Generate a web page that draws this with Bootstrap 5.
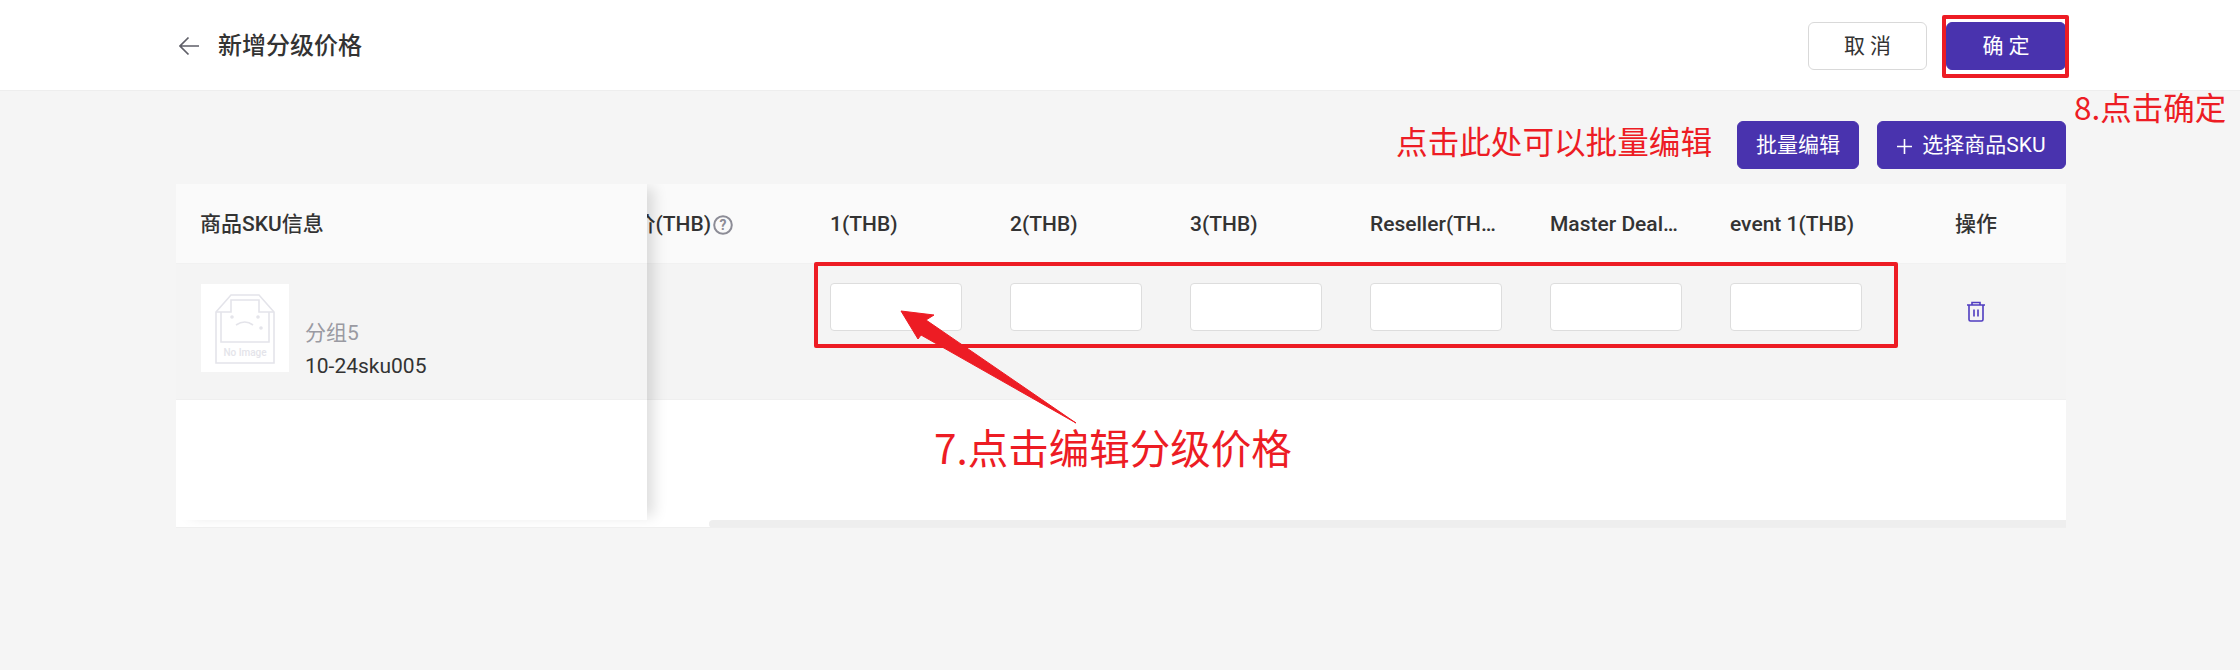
<!DOCTYPE html>
<html lang="zh-CN">
<head>
  <meta charset="UTF-8" />
  <title>新增分级价格</title>
  <link href="https://cdn.jsdelivr.net/npm/bootstrap@5.3.0/dist/css/bootstrap.min.css" rel="stylesheet" />
  <style>
    body {
      background: #f5f5f5;
      color: #333;
      font-family: Roboto, "Noto Sans CJK SC", sans-serif;
      font-size: 21px;
      height: 670px;
      overflow: hidden;
      position: relative;
    }

    /* top bar */
    .top-bar {
      height: 91px;
      background: #fff;
      border-bottom: 1px solid #eee;
      padding: 22px 174px 0 179px;
    }
    .page-title { font-size: 24px; font-weight: 500; line-height: 48px; margin-left: 19px; }
    .back-arrow { width: 20px; height: 48px; }

    .btn-plain, .btn-violet {
      height: 48px;
      font-size: 21px;
      line-height: 1;
      border-radius: 6px;
      padding: 0;
    }
    .btn-plain { width: 119px; margin-right: 19px; background: #fff; border: 1px solid #d9d9d9; color: #333; letter-spacing: 5px; padding-left: 5px; }
    .btn-violet { background: #4933ae; border: 1px solid #4933ae; color: #fff; }
    .btn-violet:hover { background: #4933ae; border-color: #4933ae; color: #fff; }
    .btn-ok { width: 120px; letter-spacing: 5px; padding-left: 5px; }
    .btn-batch { width: 122px; margin-right: 18px; }
    .btn-sku { width: 189px; }
    .btn-sku svg { margin-right: 10px; vertical-align: -2px; }

    /* toolbar */
    .tool-row { height: 93px; padding: 30px 174px 0 0; }
    .mark-text { color: #ed1c24; font-family: "Noto Sans CJK SC", sans-serif; line-height: 1; white-space: nowrap; }
    .mark-batch { font-size: 31.6px; margin-right: 25px; }

    /* table panel */
    .price-panel {
      margin-left: 176px;
      width: 1890px;
      height: 344px;
      background: #fff;
      overflow: hidden;
      border-bottom: 1px solid #efefef;
    }
    .fixed-col {
      width: 471px;
      height: 336px;
      background: #fff;
      flex: none;
      position: relative;
      z-index: 1;
      box-shadow: 11px 0 13px -4px rgba(0, 0, 0, .13);
    }
    .scroll-col { width: 1419px; height: 344px; }
    .head-row {
      height: 80px;
      padding-top: 2px;
      background: #fafafa;
      font-weight: 500;
      border-bottom: 1px solid #f1f1f1;
    }
    .data-row { height: 136px; background: #f4f4f4; border-bottom: 1px solid #efefef; }
    .fixed-col .head-row { padding-left: 24px; }
    .fixed-col .data-row { padding: 20px 0 0 25px; }
    .thumb-box { width: 88px; height: 88px; background: #fff; margin-right: 16px; flex: none; }
    .sku-text { padding-top: 33px; line-height: 33px; }
    .sku-group { color: #9a9aa2; }

    .price-cell { width: 180px; flex: none; padding-left: 24px; padding-right: 24px; }
    .head-row .price-cell { padding-right: 27px; }
    .clip-cell { width: 159px; flex: none; overflow: hidden; padding-right: 73px; white-space: nowrap; }
    .help-icon { margin-left: 2px; flex: none; }
    .data-row .price-cell { padding-top: 19px; }
    .price-input {
      height: 48px;
      border: 1px solid #ddd;
      border-radius: 4px;
      background: #fff;
      padding: 0 10px;
    }
    .head-action { width: 180px; flex: none; }
    .action-cell { width: 180px; flex: none; padding-top: 37px; }
    .fake-scroll { height: 8px; margin: auto 0 0 62px; background: #eee; border-radius: 4px 0 0 4px; }

    /* red annotations laid over the page */
    .mark-box { position: absolute; border: 4px solid #ed1c24; border-radius: 2px; }
    .mark-ok { left: 1942px; top: 15px; width: 127px; height: 63px; }
    .mark-inputs { left: 814px; top: 262px; width: 1084px; height: 86px; }
    .mark-float { position: absolute; }
    .mark-confirm { left: 2074px; top: 91px; font-size: 31.5px; }
    .mark-edit { left: 934px; top: 427px; font-size: 40.5px; }
    .mark-arrow { position: absolute; left: 890px; top: 300px; }
  </style>
</head>
<body>
  <div class="top-bar d-flex align-items-start">
    <svg class="back-arrow" viewBox="0 0 20 48" fill="none" stroke="#5f5f68" stroke-width="1.7">
      <path d="M20 24H1M9.5 15.5 1 24l8.5 8.5" />
    </svg>
    <div class="page-title flex-grow-1">新增分级价格</div>
    <button type="button" class="btn btn-plain">取消</button>
    <button type="button" class="btn btn-violet btn-ok">确定</button>
  </div>

  <div class="tool-row d-flex justify-content-end align-items-start">
    <span class="mark-text mark-batch mt-1">点击此处可以批量编辑</span>
    <button type="button" class="btn btn-violet btn-batch">批量编辑</button>
    <button type="button" class="btn btn-violet btn-sku">
      <svg width="15" height="15" viewBox="0 0 15 15" stroke="#fff" stroke-width="1.6"><path d="M7.5 0v15M0 7.5h15" /></svg>选择商品SKU
    </button>
  </div>

  <div class="price-panel d-flex">
    <div class="fixed-col">
      <div class="head-row d-flex align-items-center">商品SKU信息</div>
      <div class="data-row d-flex align-items-start">
        <div class="thumb-box">
          <svg width="88" height="88" viewBox="0 0 88 88" fill="none" stroke="#e4e4ea" stroke-width="1.6">
            <path d="M15 28 30 11h28l15 17v51H15z" />
            <path d="M15 28h15V16h28v12h15M20 28v30h48V28" />
            <path d="M35 41q9-6 17 0" />
            <circle cx="31" cy="33" r="1" fill="#e4e4ea" />
            <circle cx="57" cy="33" r="1" fill="#e4e4ea" />
            <circle cx="60" cy="44" r="1" fill="#e4e4ea" />
            <text x="44" y="72" text-anchor="middle" font-family="Roboto, sans-serif" font-size="10" font-weight="500" fill="#e4e4ea" stroke="none">No Image</text>
          </svg>
        </div>
        <div class="sku-text">
          <div class="sku-group">分组5</div>
          <div>10-24sku005</div>
        </div>
      </div>
    </div>

    <div class="scroll-col d-flex flex-column">
      <div class="head-row d-flex align-items-center">
        <div class="clip-cell d-flex justify-content-end align-items-center">
          <span>零售价(THB)</span>
          <svg class="help-icon" width="20" height="20" viewBox="0 0 20 20" fill="none" stroke="#8c8c96" stroke-width="2">
            <circle cx="10" cy="10" r="8.8" />
            <text x="10" y="15" text-anchor="middle" font-family="Roboto, sans-serif" font-size="14" font-weight="700" fill="#8c8c96" stroke="none">?</text>
          </svg>
        </div>
        <div class="price-cell text-truncate">1(THB)</div>
        <div class="price-cell text-truncate">2(THB)</div>
        <div class="price-cell text-truncate">3(THB)</div>
        <div class="price-cell text-truncate">Reseller(THB)</div>
        <div class="price-cell text-truncate">Master Dealer(THB)</div>
        <div class="price-cell text-truncate">event 1(THB)</div>
        <div class="head-action text-center">操作</div>
      </div>
      <div class="data-row d-flex align-items-start">
        <div class="clip-cell"></div>
        <div class="price-cell"><input type="text" class="form-control price-input" /></div>
        <div class="price-cell"><input type="text" class="form-control price-input" /></div>
        <div class="price-cell"><input type="text" class="form-control price-input" /></div>
        <div class="price-cell"><input type="text" class="form-control price-input" /></div>
        <div class="price-cell"><input type="text" class="form-control price-input" /></div>
        <div class="price-cell"><input type="text" class="form-control price-input" /></div>
        <div class="action-cell d-flex justify-content-center">
          <svg width="20" height="21" viewBox="0 0 20 21" fill="none" stroke="#4f3cc0" stroke-width="1.6">
            <path d="M1 4h18M6 4V1.5h8V4M3 4v14.5a1.5 1.5 0 0 0 1.5 1.5h11a1.5 1.5 0 0 0 1.5-1.5V4M8 8.5v7M12 8.5v7" />
          </svg>
        </div>
      </div>
      <div class="fake-scroll"></div>
    </div>
  </div>

  <!-- annotations -->
  <div class="mark-box mark-ok"></div>
  <div class="mark-box mark-inputs"></div>
  <div class="mark-float mark-text mark-confirm">8.点击确定</div>
  <div class="mark-float mark-text mark-edit">7.点击编辑分级价格</div>
  <svg class="mark-arrow" width="200" height="130" viewBox="890 300 200 130">
    <path d="M901 311 934 315 926 320 1076 423 921 335 918 339z" fill="#ed1c24" stroke="#ed1c24" stroke-linejoin="round" />
  </svg>

  <script src="https://cdn.jsdelivr.net/npm/bootstrap@5.3.0/dist/js/bootstrap.bundle.min.js"></script>
</body>
</html>
